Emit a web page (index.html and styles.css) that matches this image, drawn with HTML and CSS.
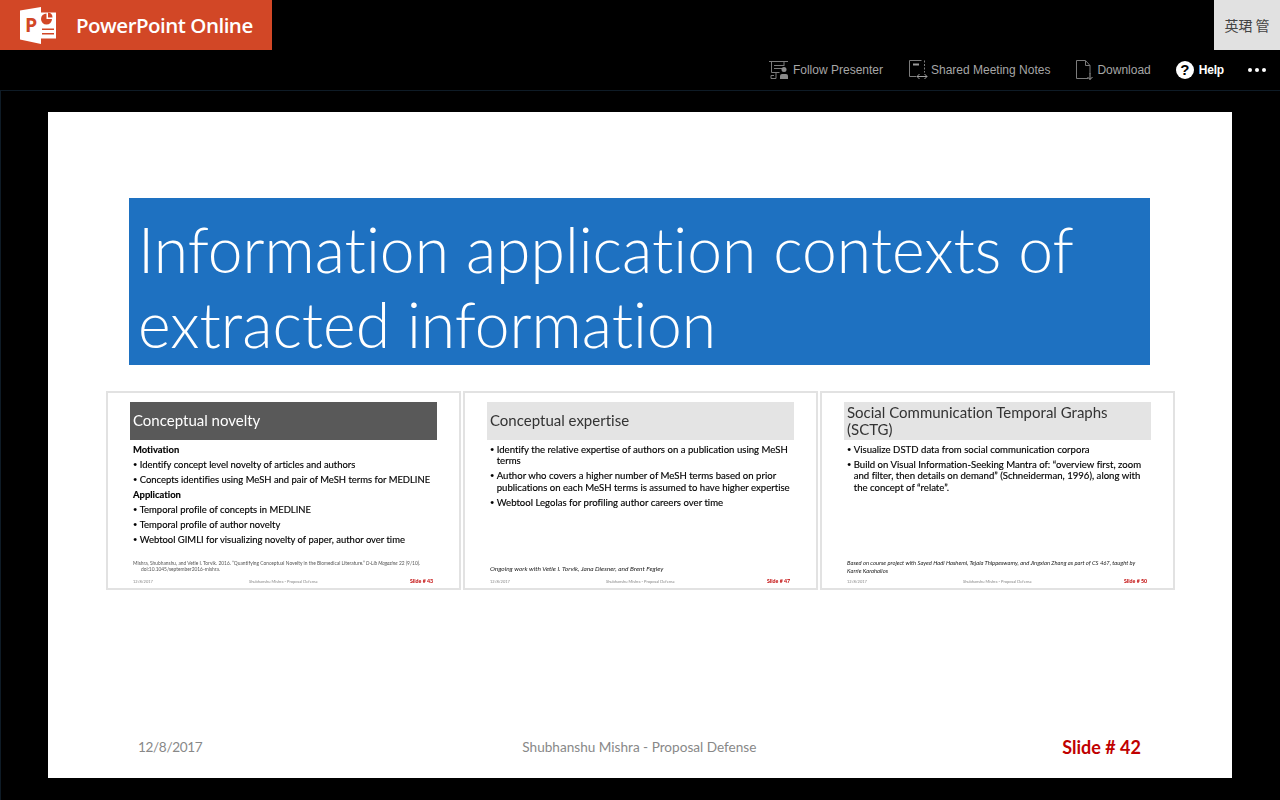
FILE: index.html
```html
<!DOCTYPE html>
<html lang="en">
<head>
<meta charset="utf-8">
<title>PowerPoint Online</title>
<link rel="stylesheet" href="styles.css">
</head>
<body>
<header class="topbar">
  <div class="brand">
    <svg class="logo" width="36" height="37" viewBox="0 0 36 37">
      <path fill="#fff" d="M21 5.500h15v26H21z"/>
      <path fill="#d24726" d="M26.500 6.500a5.500 5.500 0 1 0 5.500 5.500h-5.500z"/>
      <path fill="#d24726" d="M28 5.500a5 5 0 0 1 4.500 5H28z"/>
      <path fill="#d24726" d="M22 21.500h12V23H22zM22 26h12v1.500H22z"/>
      <path fill="#fff" d="M0 3.500L21 0v37L0 32.500z"/>
      <text class="logo-p" x="5" y="24.500">P</text>
    </svg>
    <span class="brand-name">PowerPoint Online</span>
  </div>
  <div class="avatar">英珺 管</div>
</header>
<nav class="toolbar">
  <a class="tool tool-follow">
    <svg width="20" height="20" viewBox="0 0 20 20" fill="none" stroke="#7c7c7c">
      <path d="M0 1.500h19M2.500 2v10.500h8M5 5.500h10M5 8.500h8M5 15.500h-3v3h5M7 12.500v6M15 2v4"/>
      <circle cx="15" cy="9.500" r="2.500" fill="#8a8a8a" stroke="none"/>
      <path d="M11 19v-3q0-2 2-2h4q2 0 2 2v3z" fill="#8a8a8a" stroke="none"/>
    </svg>
    <span>Follow Presenter</span>
  </a>
  <a class="tool tool-notes">
    <svg width="19" height="20" viewBox="0 0 19 20" fill="none" stroke="#7c7c7c">
      <path d="M7 16.500H.5V.500h12"/>
      <path d="M15.500 .5v12" stroke-dasharray="2 1.500"/>
      <path d="M4 4.500h6" stroke-width="2" stroke="#9a9a9a"/>
      <path d="M8 16.500h10M10.500 14l-2.500 2.500 2.500 2.500M15.500 14l2.500 2.500-2.500 2.500" stroke="#a0a0a0"/>
    </svg>
    <span>Shared Meeting Notes</span>
  </a>
  <a class="tool tool-download">
    <svg width="17" height="20" viewBox="0 0 17 20" fill="none" stroke="#7c7c7c">
      <path d="M12 18.500H.5V.500h9l4.500 5v8M9.500 1v4.500H14"/>
      <path d="M14 13v6.500M11.500 17l2.500 2.500 2.500-2.500" stroke="#a0a0a0"/>
    </svg>
    <span>Download</span>
  </a>
  <a class="tool tool-help">
    <span class="help-icon">?</span>
    <span>Help</span>
  </a>
  <div class="more"><i></i><i></i><i></i></div>
</nav>
<main class="stage">
  <section class="slide">
    <h1 class="slide-title">Information application contexts of extracted information</h1>
    <div class="thumbs">
      <article class="thumb">
        <h2 class="thumb-title thumb-title-dark">Conceptual novelty</h2>
        <div class="thumb-body thumb-body-tight">
          <p class="lead">Motivation</p>
          <p class="point">Identify concept level novelty of articles and authors</p>
          <p class="point">Concepts identifies using MeSH and pair of MeSH terms for MEDLINE</p>
          <p class="lead">Application</p>
          <p class="point">Temporal profile of concepts in MEDLINE</p>
          <p class="point">Temporal profile of author novelty</p>
          <p class="point">Webtool GIMLI for visualizing novelty of paper, author over time</p>
        </div>
        <p class="note note-cite">Mishra, Shubhanshu, and Vetle I. Torvik. 2016. “Quantifying Conceptual Novelty in the Biomedical Literature.” <em>D-Lib Magazine</em> 22 (9/10).<br><span class="note-indent">doi:10.1045/september2016-mishra.</span></p>
        <footer class="thumb-foot"><span class="foot-a">12/8/2017</span><span class="foot-b">Shubhanshu Mishra - Proposal Defense</span><b>Slide # 43</b></footer>
      </article>
      <article class="thumb">
        <h2 class="thumb-title">Conceptual expertise</h2>
        <div class="thumb-body">
          <p class="point">Identify the relative expertise of authors on a publication using MeSH terms</p>
          <p class="point">Author who covers a higher number of MeSH terms based on prior publications on each MeSH terms is assumed to have higher expertise</p>
          <p class="point">Webtool Legolas for profiling author careers over time</p>
        </div>
        <p class="note note-ongoing"><em>Ongoing work with Vetle I. Torvik, Jana Diesner, and Brent Fegley</em></p>
        <footer class="thumb-foot"><span class="foot-a">12/8/2017</span><span class="foot-b">Shubhanshu Mishra - Proposal Defense</span><b>Slide # 47</b></footer>
      </article>
      <article class="thumb">
        <h2 class="thumb-title thumb-title-two">Social Communication Temporal Graphs (SCTG)</h2>
        <div class="thumb-body">
          <p class="point">Visualize DSTD data from social communication corpora</p>
          <p class="point">Build on Visual Information-Seeking Mantra of: “overview first, zoom and filter, then details on demand” (Schneiderman, 1996), along with the concept of “relate”.</p>
        </div>
        <p class="note note-based"><em>Based on course project with Sayed Hadi Hashemi, Tejala Thippeswamy, and Jingxian Zhang as part of CS 467, taught by Karrie Karahalios</em></p>
        <footer class="thumb-foot"><span class="foot-a">12/8/2017</span><span class="foot-b">Shubhanshu Mishra - Proposal Defense</span><b>Slide # 50</b></footer>
      </article>
    </div>
    <footer class="slide-foot">
      <span class="foot-date">12/8/2017</span>
      <span class="foot-name">Shubhanshu Mishra - Proposal Defense</span>
      <b class="foot-num">Slide # 42</b>
    </footer>
  </section>
</main>
</body>
</html>
```
FILE: styles.css
```css
* { box-sizing: border-box; }
html, body { margin: 0; padding: 0; height: 800px; overflow: hidden; background: #000; }
body { font-family: "Liberation Sans", Arial, sans-serif; }
h1, h2, p { margin: 0; font-weight: normal; }

.topbar { display: flex; justify-content: space-between; height: 50px; }
.brand { display: flex; align-items: center; width: 272px; background: #d24726; padding-left: 20px; }
.logo { flex: none; }
.logo-p { font-family: "Open Sans", sans-serif; font-weight: 700; font-size: 19.500px; fill: #d24726; }
.brand-name { margin-left: 20px; color: #fff; font-family: "Open Sans", sans-serif; font-size: 20.500px; font-weight: 600; letter-spacing: -0.5px; white-space: nowrap; }
.avatar { width: 66px; background: #e1e1e1; color: #444; display: flex; align-items: center; justify-content: center; font-family: "Noto Sans CJK SC", sans-serif; font-size: 14px; }

.toolbar { display: flex; justify-content: flex-end; align-items: center; height: 40px; padding-right: 14px; font-size: 12px; color: #a6a6a6; }
.tool { display: flex; align-items: center; margin-right: 26px; }
.tool svg { flex: none; }
.tool-follow { gap: 4px; }
.tool-notes { gap: 3px; }
.tool-download { gap: 4px; margin-right: 25px; }
.tool-help { gap: 5px; color: #fff; font-weight: 700; margin-right: 24px; letter-spacing: -0.2px; }
.help-icon { width: 18px; height: 18px; border-radius: 50%; background: #fff; color: #000; font-size: 15px; font-weight: 700; line-height: 18px; text-align: center; letter-spacing: 0; }
.more { display: flex; gap: 3px; }
.more i { width: 4px; height: 4px; border-radius: 50%; background: #fff; }

.stage { height: 710px; border-top: 1px solid #0e1b26; border-left: 1px solid #0e1b26; padding: 21px 0 0 47px; }
.slide { width: 1184px; height: 666px; background: #fff; padding: 86px 0 0 58px; font-family: Lato, "Open Sans", sans-serif; font-variant-ligatures: none; display: flex; flex-direction: column; }
.slide-title { width: 1021px; height: 167px; margin-left: 23px; padding: 13px 9px 0; background: #1e71c1; color: #fff; font-size: 62.400px; font-weight: 300; line-height: 75px; }

.thumbs { display: flex; gap: 2px; width: 1069px; height: 199px; margin-top: 26px; filter: blur(0.3px); }
.thumb { width: 355px; height: 199px; border: 2px solid #e2e2e2; padding: 8.500px 22px 0; display: flex; flex-direction: column; color: #000; }
.thumb-title { flex: none; height: 38px; background: #e4e4e4; color: #333; font-size: 15px; padding-left: 3px; line-height: 37px; font-weight: 400; }
.thumb-title-dark { background: #595959; color: #fff; }
.thumb-title-two { line-height: 17px; padding-top: 2px; }
.thumb-body { flex: 1; font-size: 9.600px; line-height: 11.500px; padding: 4px 0 0 3px; -webkit-text-stroke: 0.15px #000; }
.thumb-body-tight { font-size: 9.450px; padding-top: 2px; }
.thumb-body-tight .point, .lead { line-height: 15px; margin-bottom: 0; }
.lead { font-weight: 700; }
.point { position: relative; padding-left: 6.700px; margin-bottom: 3.500px; }
.point::before { content: "•"; position: absolute; left: 0; font-size: 7.500px; }
.note { flex: none; font-size: 5.800px; line-height: 8px; color: #222; }
.note-cite { font-size: 4.870px; line-height: 6px; color: #555; padding-left: 3px; margin-bottom: 2px; white-space: nowrap; }
.note-indent { padding-left: 8px; }
.note-ongoing { font-size: 6.500px; padding-left: 3px; margin-bottom: 1px; }
.note-based { padding-left: 3px; margin-bottom: -1px; }
.thumb-foot { flex: none; display: flex; align-items: center; height: 14px; font-size: 4px; color: #888; padding-left: 3px; white-space: nowrap; }
.foot-a { width: 116px; }
.foot-b { width: 161px; }
.thumb-foot b { color: #c00000; font-size: 5.300px; }

.slide-foot { display: flex; align-items: center; width: 1003px; margin: 139px 0 0 32px; height: 36px; font-size: 13.600px; color: #888; }
.foot-date { width: 385px; letter-spacing: -0.35px; }
.foot-name { width: 541px; }
.foot-num { color: #c00000; font-size: 18px; white-space: nowrap; }
```
